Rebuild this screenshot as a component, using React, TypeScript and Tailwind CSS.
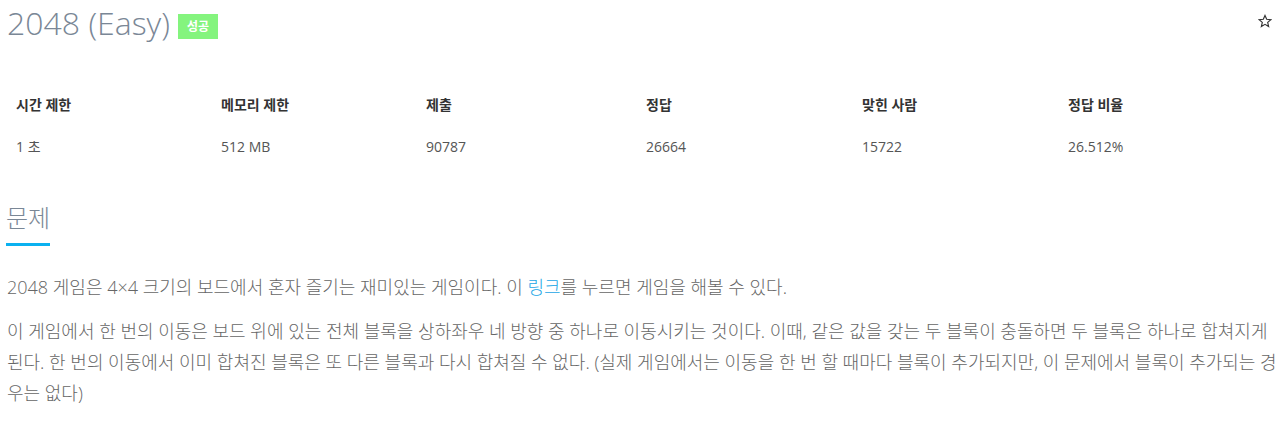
const font = "font-['Open_Sans','Noto_Sans_CJK_KR',sans-serif]";

const stats = [
  { label: "시간 제한", value: "1 초" },
  { label: "메모리 제한", value: "512 MB" },
  { label: "제출", value: "90787" },
  { label: "정답", value: "26664" },
  { label: "맞힌 사람", value: "15722" },
  { label: "정답 비율", value: "26.512%" },
];

function Star() {
  return (
    <svg className="w-[14px] h-[14px] text-[#333]" viewBox="0 0 24 24" fill="none" stroke="currentColor" strokeWidth={2}>
      <path d="M12 2.5l2.9 6.6 7.1.6-5.4 4.7 1.6 7-6.2-3.7-6.2 3.7 1.6-7L2 9.7l7.1-.6z" strokeLinejoin="miter" />
    </svg>
  );
}

export default function App() {
  return (
    <div className={`${font} w-[1284px] h-[423px] bg-white text-[#555] overflow-hidden`}>
      <div className="flex items-start justify-between pl-[7px] pr-[12px] pt-[1px]">
        <div className="flex items-center gap-[8px]">
          <h1 className="text-[32px] font-light leading-[44px] text-[#7a8796]">2048 (Easy)</h1>
          <span className="mt-[6px] bg-[#84f47e] text-white text-[12px] font-bold px-[9px] leading-[25px] h-[25px]">성공</span>
        </div>
        <div className="mt-[13px]">
          <Star />
        </div>
      </div>

      <div className="mt-[45px] grid grid-cols-[205px_205px_220px_216px_206px_1fr] px-[16px] text-[14px]">
        {stats.map((s) => (
          <div key={s.label} className="pt-[5px] pb-[12px] font-bold text-[#333] leading-[20px]">
            {s.label}
          </div>
        ))}
        {stats.map((s) => (
          <div key={s.value} className="py-[10px] leading-[20px] text-[#555]">
            {s.value}
          </div>
        ))}
      </div>

      <div className="mt-[34px] pl-[6px]">
        <h2 className="inline-block text-[24px] font-light text-[#7a8796] leading-[33px] pb-[9px] border-b-[3px] border-[#0ab1f0]">
          문제
        </h2>
      </div>

      <div className="pl-[7px] pr-[2px] mt-[26px] text-[18px] font-light leading-[31px] text-[#666] break-all">
        <p className="mb-[13px]">
          2048 게임은 4×4 크기의 보드에서 혼자 즐기는 재미있는 게임이다. 이{" "}
          <a className="text-[#1aa6e6]">링크</a>를 누르면 게임을 해볼 수 있다.
        </p>
        <p>
          이 게임에서 한 번의 이동은 보드 위에 있는 전체 블록을 상하좌우 네 방향 중 하나로 이동시키는 것이다. 이때, 같은 값을 갖는 두 블록이 충돌하면 두 블록은 하나로 합쳐지게 된다. 한 번의 이동에서 이미 합쳐진 블록은 또 다른 블록과 다시 합쳐질 수 없다. (실제 게임에서는 이동을 한 번 할 때마다 블록이 추가되지만, 이 문제에서 블록이 추가되는 경우는 없다)
        </p>
      </div>
    </div>
  );
}
